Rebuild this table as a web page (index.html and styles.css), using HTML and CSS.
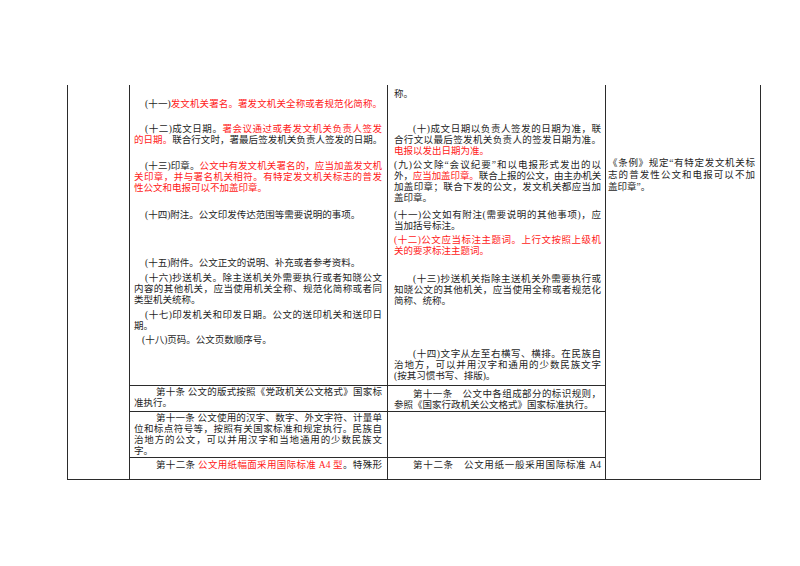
FILE: index.html
```html
<!DOCTYPE html>
<html lang="zh">
<head>
<meta charset="utf-8">
<title>公文条例对照</title>
<link rel="stylesheet" href="styles.css">
</head>
<body>
<div class="page">
  <div class="table">
    <div class="cell c1"></div>

    <div class="cell c2 r1">
      <p class="para ind1"><span class="ln j">(十一)<span class="r">发文机关署名。署发文机关全称或者规范化简称。</span></span></p>
      <p class="para ind1 m14"><span class="ln j">(十二)成文日期。<span class="r">署会议通过或者发文机关负责人签发</span></span><span class="ln j tight"><span class="r">的日期。</span>联合行文时，署最后签发机关负责人签发的日期。</span></p>
      <p class="para ind1 m15"><span class="ln j">(十三)印章。<span class="r">公文中有发文机关署名的，应当加盖发文机</span></span><span class="ln j r">关印章，并与署名机关相符。有特定发文机关标志的普发</span><span class="ln r">性公文和电报可以不加盖印章。</span></p>
      <p class="para ind1 m16"><span class="ln">(十四)附注。公文印发传达范围等需要说明的事项。</span></p>
      <p class="para ind1 m37"><span class="ln">(十五)附件。公文正文的说明、补充或者参考资料。</span></p>
      <p class="para ind1 m4"><span class="ln j">(十六)抄送机关。除主送机关外需要执行或者知晓公文</span><span class="ln j">内容的其他机关，应当使用机关全称、规范化简称或者同</span><span class="ln">类型机关统称。</span></p>
      <p class="para ind1 m4"><span class="ln j">(十七)印发机关和印发日期。公文的送印机关和送印日</span><span class="ln">期。</span></p>
      <p class="para ind0 m3"><span class="ln">(十八)页码。公文页数顺序号。</span></p>
    </div>

    <div class="cell c3 r1">
      <p class="para"><span class="ln">称。</span></p>
      <p class="para ind2 m24"><span class="ln j">(十)成文日期以负责人签发的日期为准，联</span><span class="ln j">合行文以最后签发机关负责人的签发日期为准。</span><span class="ln r">电报以发出日期为准。</span></p>
      <p class="para m3"><span class="ln j">(九)公文除“会议纪要”和以电报形式发出的以</span><span class="ln j tight">外，<span class="r">应当加盖印章。</span>联合上报的公文，由主办机关</span><span class="ln j">加盖印章；联合下发的公文，发文机关都应当加</span><span class="ln">盖印章。</span></p>
      <p class="para m6"><span class="ln j">(十一)公文如有附注(需要说明的其他事项)，应</span><span class="ln">当加括号标注。</span></p>
      <p class="para r m3"><span class="ln j">(十二)公文应当标注主题词。上行文按照上级机</span><span class="ln">关的要求标注主题词。</span></p>
      <p class="para ind2 m17"><span class="ln j">(十三)抄送机关指除主送机关外需要执行或</span><span class="ln j">知晓公文的其他机关，应当使用全称或者规范化</span><span class="ln">简称、统称。</span></p>
      <p class="para ind2 m42"><span class="ln j">(十四)文字从左至右横写、横排。在民族自</span><span class="ln j">治地方，可以并用汉字和通用的少数民族文字</span><span class="ln">(按其习惯书写、排版)。</span></p>
    </div>

    <div class="cell c4">
      <p class="para note"><span class="ln j">《条例》规定“有特定发文机关标</span><span class="ln j">志的普发性公文和电报可以不加</span><span class="ln">盖印章”。</span></p>
    </div>

    <div class="cell c2 r2 pt1">
      <p class="para ind2w"><span class="ln j">第十条 公文的版式按照《党政机关公文格式》国家标</span><span class="ln">准执行。</span></p>
    </div>
    <div class="cell c3 r2 pt3">
      <p class="para ind2"><span class="ln j">第十一条　公文中各组成部分的标识规则，</span><span class="ln">参照《国家行政机关公文格式》国家标准执行。</span></p>
    </div>

    <div class="cell c2 r3 pt1">
      <p class="para ind2w"><span class="ln j">第十一条 公文使用的汉字、数字、外文字符、计量单</span><span class="ln j">位和标点符号等，按照有关国家标准和规定执行。民族自</span><span class="ln j">治地方的公文，可以并用汉字和当地通用的少数民族文</span><span class="ln">字。</span></p>
    </div>
    <div class="cell c3 r3"></div>

    <div class="cell c2 r4 pt2">
      <p class="para ind2w"><span class="ln j">第十二条 <span class="r">公文用纸幅面采用国际标准 A4 型</span>。特殊形</span></p>
    </div>
    <div class="cell c3 r4 pt2">
      <p class="para ind2"><span class="ln j">第十二条　公文用纸一般采用国际标准 A4</span></p>
    </div>
  </div>
</div>
</body>
</html>
```

FILE: styles.css
```css
html, body {
  margin: 0;
  padding: 0;
  background: #fff;
}

.page {
  padding: 85px 0 0 67px;
  font-family: "Liberation Serif", "Noto Sans CJK SC", serif;
  font-size: 9.5px;
  line-height: 11px;
  color: #1e1e1e;
}

.table {
  display: grid;
  grid-template-columns: 62px 258px 218px 155px;
  grid-template-rows: 301px 26px 46px 22px;
  width: max-content;
  border-left: 1px solid #2b2b2b;
}

.cell {
  box-sizing: border-box;
  border-right: 1px solid #2b2b2b;
  border-bottom: 1px solid #2b2b2b;
  min-width: 0;
}

.c1 { grid-column: 1; grid-row: 1 / 5; }
.c4 { grid-column: 4; grid-row: 1 / 5; padding: 72px 5px 0 2px; line-height: 12px; }

.c2 { grid-column: 2; padding: 0 5px 0 4px; }
.c3 { grid-column: 3; padding: 0 4px 0 6px; }

.r1 { grid-row: 1; }
.r2 { grid-row: 2; }
.r3 { grid-row: 3; }
.r4 { grid-row: 4; }

.c2.r1 { padding-top: 14px; }
.c3.r1 { padding-top: 4px; }
.pt1 { padding-top: 1px; }
.pt2 { padding-top: 2px; }
.pt3 { padding-top: 3px; }

.para {
  margin: 0;
}

.ln {
  display: block;
  white-space: nowrap;
  text-align: left;
}

.j {
  text-align: justify;
  text-align-last: justify;
}

.tight {
  letter-spacing: -0.25px;
}

.ind1 > .ln:first-child { text-indent: 11px; }
.ind0 > .ln:first-child { text-indent: 8px; }
.ind2 > .ln:first-child { text-indent: 19px; }
.ind2w > .ln:first-child { text-indent: 22px; }

.r { color: #ff1a1a; }

.m3 { margin-top: 3px; }
.m4 { margin-top: 4px; }
.m6 { margin-top: 6px; }
.m14 { margin-top: 14px; }
.m15 { margin-top: 15px; }
.m16 { margin-top: 16px; }
.m17 { margin-top: 17px; }
.m24 { margin-top: 24px; }
.m37 { margin-top: 37px; }
.m42 { margin-top: 42px; }
```
